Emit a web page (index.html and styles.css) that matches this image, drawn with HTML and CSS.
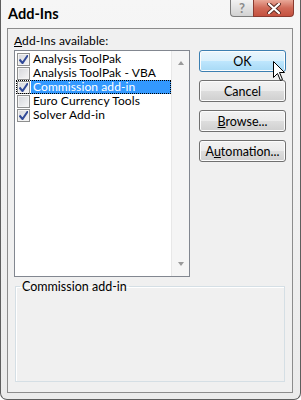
FILE: index.html
```html
<!DOCTYPE html>
<html lang="en">
<head>
    <meta charset="UTF-8">
    <title>Add-Ins</title>
    <link rel="stylesheet" href="styles.css">
</head>
<body>
    <div class="window">
        <div class="titlebar">
            <span class="title">Add-Ins</span>
            <div class="caption-buttons">
                <div class="cap-btn help">?</div>
                <div class="cap-btn close">
                    <svg width="14" height="11" viewBox="0 0 14 11">
                        <path d="M2 1 L12 10 M12 1 L2 10" stroke="#5a2a22" stroke-width="4" stroke-linecap="round"/>
                        <path d="M2 1 L12 10 M12 1 L2 10" stroke="#ffffff" stroke-width="2.2" stroke-linecap="round"/>
                    </svg>
                </div>
            </div>
        </div>

        <div class="client">
            <div class="label"><u>A</u>dd-Ins available:</div>

            <div class="main">
                <div class="listbox">
                    <ul class="items">
                        <li class="item"><span class="check checked"></span><span class="name">Analysis ToolPak</span></li>
                        <li class="item"><span class="check"></span><span class="name">Analysis ToolPak - VBA</span></li>
                        <li class="item selected"><span class="check checked"></span><span class="name">Commission add-in</span></li>
                        <li class="item"><span class="check"></span><span class="name">Euro Currency Tools</span></li>
                        <li class="item"><span class="check checked"></span><span class="name">Solver Add-in</span></li>
                    </ul>
                    <div class="scrollbar">
                        <span class="arrow up"></span>
                        <span class="arrow down"></span>
                    </div>
                </div>

                <div class="buttons">
                    <button class="btn default">OK</button>
                    <button class="btn">Cancel</button>
                    <button class="btn"><u>B</u>rowse...</button>
                    <button class="btn">A<u>u</u>tomation...</button>
                </div>
            </div>

            <fieldset class="group">
                <legend>Commission add-in</legend>
            </fieldset>
        </div>

        <!-- mouse pointer resting on OK -->
        <svg class="cursor" width="13" height="21" viewBox="0 0 13 21">
            <path d="M0.5 0.5 L0.5 16.5 L4.5 12.5 L7.5 19.5 L9.5 18.5 L6.5 11.5 L11.5 11.5 Z" fill="#ffffff" stroke="#000000" stroke-width="1"/>
        </svg>
    </div>
</body>
</html>
```

FILE: styles.css
```css
body {
    margin: 0;
    font-family: Lato, "Noto Sans", Arial, sans-serif;
    font-size: 12px;
    color: #000;
    background-color: #ffffff;
}

.window {
    position: relative;
    box-sizing: border-box;
    width: 301px;
    height: 400px;
    display: flex;
    flex-direction: column;
    padding: 0 7px 6px 6px;
    background: linear-gradient(#f6f6f6, #ebebeb);
    border: 1px solid #5e5e5e;
    border-top: none;
    border-radius: 0 0 7px 7px;
}

.titlebar {
    height: 28px;
    display: flex;
    justify-content: space-between;
    align-items: flex-start;
}

.title {
    margin: 5px 0 0 1px;
    font-size: 14.5px;
    font-weight: bold;
}

.caption-buttons {
    display: flex;
    margin-right: -1px;
}

.cap-btn {
    height: 16px;
    display: flex;
    justify-content: center;
    align-items: center;
    border: 1px solid #7c7c7c;
    border-top: none;
}

.help {
    width: 22px;
    border-right: none;
    border-radius: 0 0 0 4px;
    background: linear-gradient(#f2f2f2, #d2d2d2);
    color: #8a8a8a;
    font-size: 13px;
    font-weight: bold;
}

.close {
    width: 39px;
    border-color: #8a3a30;
    border-radius: 0 0 4px 0;
    background: linear-gradient(#e9a898, #d06a58 50%, #c4513f);
}

.client {
    flex: 1;
    display: flex;
    flex-direction: column;
    padding: 4px 6px 0 6px;
    background-color: #f0f0f0;
    border: 1px solid #8c8c8c;
}

.label {
    height: 16px;
    line-height: 16px;
    margin-bottom: 1px;
    letter-spacing: 0.1px;
}

.main {
    display: flex;
    gap: 9px;
}

.listbox {
    box-sizing: border-box;
    width: 176px;
    height: 227px;
    display: flex;
    background-color: #fff;
    border: 1px solid #828790;
}

.items {
    flex: 1;
    list-style: none;
    margin: 0;
    padding: 1px 0 0 1px;
}

.item {
    height: 14px;
    display: flex;
    align-items: center;
}

.check {
    box-sizing: border-box;
    width: 13px;
    height: 13px;
    margin-left: 1px;
    margin-right: 1px;
    border: 1px solid #8e8f8f;
    background: linear-gradient(135deg, #d4d6da, #f7f7f7);
    box-shadow: inset 0 0 0 1px #f4f4f4;
}

.check.checked {
    background-image: url("data:image/svg+xml,%3Csvg xmlns='http://www.w3.org/2000/svg' width='11' height='11'%3E%3Cpath d='M1.5 5.5 L4.5 9 L10 1' fill='none' stroke='%23314a98' stroke-width='2'/%3E%3C/svg%3E"), linear-gradient(135deg, #d4d6da, #f7f7f7);
}

.name {
    flex: 1;
    height: 14px;
    line-height: 14px;
    padding-left: 2px;
    white-space: nowrap;
    letter-spacing: 0.1px;
}

.selected {
    outline: 1px dotted #000;
    outline-offset: -1px;
}

.selected .name {
    background-color: #3399ff;
    color: #fff;
}

.scrollbar {
    width: 17px;
    display: flex;
    flex-direction: column;
    justify-content: space-between;
    align-items: center;
    padding: 10px 0 10px 0;
    background-color: #f5f5f5;
    border-left: 1px solid #e8e8e8;
}

.arrow {
    width: 0;
    height: 0;
    border-left: 3.5px solid transparent;
    border-right: 3.5px solid transparent;
}

.arrow.up {
    border-bottom: 4px solid #9a9a9a;
}

.arrow.down {
    border-top: 4px solid #9a9a9a;
}

.buttons {
    display: flex;
    flex-direction: column;
    gap: 8px;
}

.btn {
    width: 87px;
    height: 22px;
    padding: 0;
    font-family: inherit;
    font-size: 12.5px;
    color: #000;
    border: 1px solid #707070;
    border-radius: 3px;
    background: linear-gradient(#f2f2f2 0%, #ebebeb 50%, #dddddd 51%, #cfcfcf 100%);
    box-shadow: inset 0 0 0 1px #fcfcfc;
}

.btn.default {
    border-color: #3c7fb1;
    background: linear-gradient(#eaf6fd 0%, #d9f0fc 50%, #bee6fd 51%, #a7d9f5 100%);
}

.group {
    box-sizing: border-box;
    height: 103px;
    margin: 2px 1px 0 1px;
    padding: 0;
    border: 1px solid #d5dfe5;
    box-shadow: inset 1px 1px 0 #fff;
}

.group legend {
    margin-left: 4px;
    padding: 0 2px;
    line-height: 15px;
    font-size: 12.5px;
}

.cursor {
    position: absolute;
    left: 272px;
    top: 61px;
}
```
